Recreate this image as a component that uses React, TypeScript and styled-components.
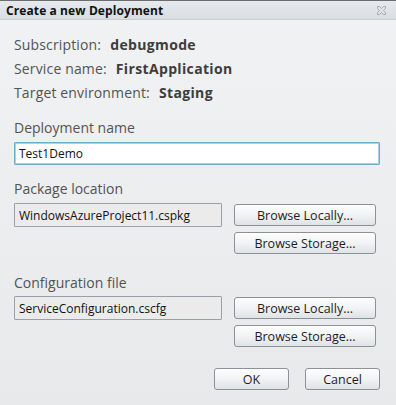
import React from "react";
import styled, { createGlobalStyle } from "styled-components";

const Global = createGlobalStyle`
  html, body { margin: 0; padding: 0; }
  body { width: 396px; height: 405px; overflow: hidden; background: #eceef0; }
  * { box-sizing: border-box; }
`;

const Window = styled.div`
  width: 396px;
  height: 405px;
  display: flex;
  flex-direction: column;
  border-top: 1px solid #6e6e6e;
  background: linear-gradient(#f0f2f3, #e7e9eb);
  font-family: "Open Sans", "Noto Sans", sans-serif;
`;

const TitleBar = styled.div`
  height: 19px;
  display: flex;
  align-items: center;
  justify-content: space-between;
  padding: 0 9px 0 6px;
  background: linear-gradient(#e6eaee, #d9dee3);
  border-bottom: 1px solid #c9ced3;
`;

const Title = styled.div`
  font-weight: 700;
  font-size: 12px;
  color: #111;
  letter-spacing: 0.1px;
`;

const Body = styled.div`
  flex: 1;
  display: flex;
  flex-direction: column;
  padding: 13px 16px 0 14px;
`;

const InfoRow = styled.div`
  height: 24px;
  line-height: 24px;
  font-size: 14px;
  color: #535353;
  letter-spacing: 0.15px;
`;

const Value = styled.span`
  font-weight: 700;
  color: #3d3d3d;
  margin-left: 9px;
  letter-spacing: 0.35px;
`;

const Label = styled.div<{ $top: number }>`
  margin-top: ${(p) => p.$top}px;
  height: 24px;
  line-height: 24px;
  font-size: 14px;
  color: #535353;
`;

const TextInput = styled.div<{ $focused?: boolean }>`
  height: ${(p) => (p.$focused ? 23 : 24)}px;
  display: flex;
  align-items: center;
  padding-left: 4px;
  font-size: 12px;
  color: #111;
  background: ${(p) => (p.$focused ? "#fff" : "#ebebeb")};
  border: 1px solid ${(p) => (p.$focused ? "#69aec4" : "#9aa0a5")};
  box-shadow: ${(p) => (p.$focused ? "inset 0 0 0 1px #a8d4e2" : "none")};
  border-radius: 1px;
`;

const FileRow = styled.div<{ $top: number }>`
  margin-top: ${(p) => p.$top}px;
  display: grid;
  grid-template-columns: 208px 142px;
  column-gap: 12px;
  align-items: start;
`;

const ButtonStack = styled.div`
  display: flex;
  flex-direction: column;
  gap: 6px;
  padding-top: 1px;
`;

const Button = styled.button<{ $w?: number }>`
  width: ${(p) => (p.$w ? `${p.$w}px` : "100%")};
  height: 22px;
  padding: 0;
  font-family: "Open Sans", "Noto Sans", sans-serif;
  font-size: 12.5px;
  color: #1e1e1e;
  background: linear-gradient(#fdfdfd, #f1f3f4 50%, #dfe3e6);
  border: 1px solid #8c9197;
  border-radius: 3px;
  box-shadow: inset 0 1px 0 #fff;
`;

const Footer = styled.div`
  margin-top: 21px;
  display: flex;
  justify-content: flex-end;
  gap: 16px;
`;

const CloseIcon = () => (
  <svg width="11" height="11" viewBox="0 0 11 11">
    <g fill="none" stroke="#a6aaae" strokeWidth="1">
      <path d="M1.5 1.5h2l2 2 2-2h2v2l-2 2 2 2v2h-2l-2-2-2 2h-2v-2l2-2-2-2z" />
    </g>
  </svg>
);

export default function App() {
  return (
    <>
      <Global />
      <Window>
        <TitleBar>
          <Title>Create a new Deployment</Title>
          <CloseIcon />
        </TitleBar>
        <Body>
          <InfoRow>
            Subscription:<Value>debugmode</Value>
          </InfoRow>
          <InfoRow>
            Service name:<Value>FirstApplication</Value>
          </InfoRow>
          <InfoRow>
            Target environment:<Value>Staging</Value>
          </InfoRow>

          <Label $top={11}>Deployment name</Label>
          <TextInput $focused style={{ marginTop: 2 }}>
            Test1Demo
          </TextInput>

          <Label $top={12}>Package location</Label>
          <FileRow $top={2}>
            <TextInput>WindowsAzureProject11.cspkg</TextInput>
            <ButtonStack>
              <Button>Browse Locally...</Button>
              <Button>Browse Storage...</Button>
            </ButtonStack>
          </FileRow>

          <Label $top={17}>Configuration file</Label>
          <FileRow $top={1}>
            <TextInput>ServiceConfiguration.cscfg</TextInput>
            <ButtonStack>
              <Button>Browse Locally...</Button>
              <Button>Browse Storage...</Button>
            </ButtonStack>
          </FileRow>

          <Footer>
            <Button $w={75}>OK</Button>
            <Button $w={75}>Cancel</Button>
          </Footer>
        </Body>
      </Window>
    </>
  );
}
